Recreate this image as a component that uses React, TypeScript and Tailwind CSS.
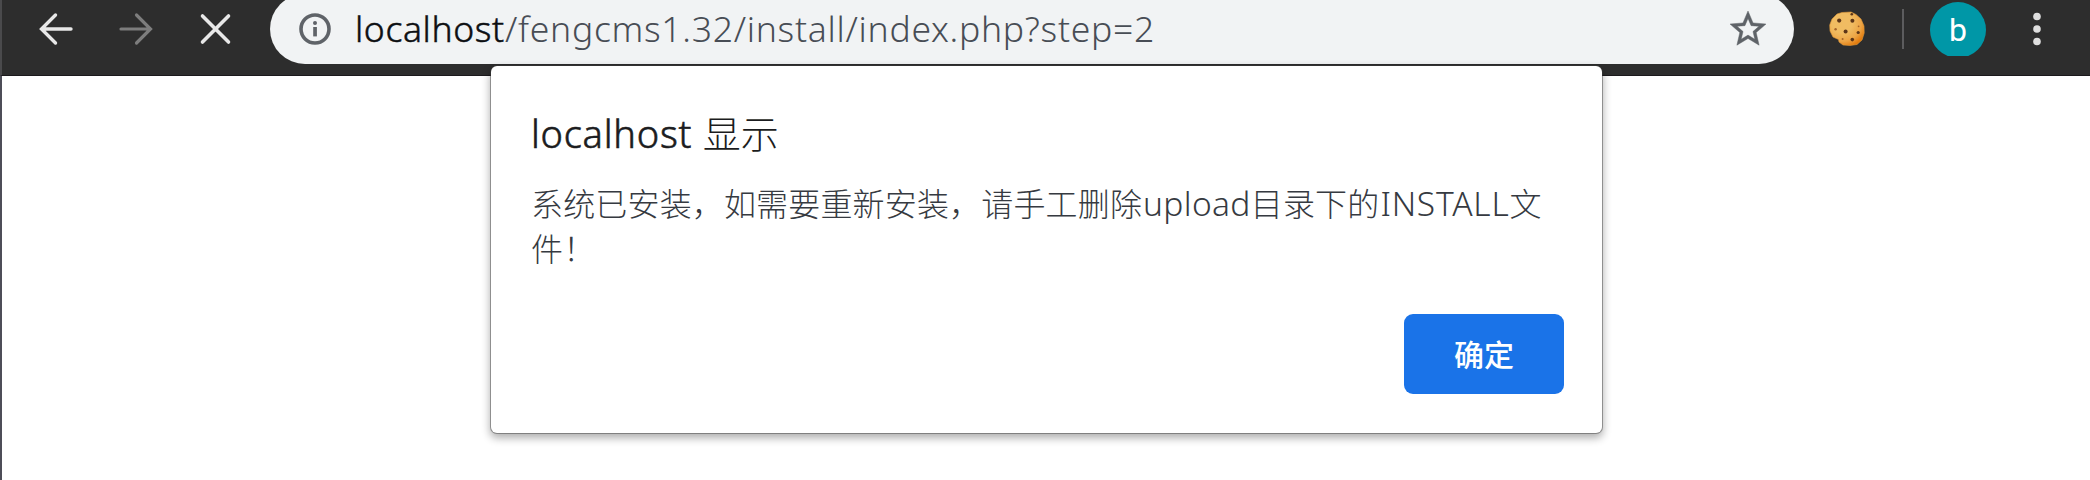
import React from "react";

const LATIN_CJK = "font-['Noto_Sans','Noto_Sans_CJK_SC',sans-serif]";

function BackIcon() {
  return (
    <svg className="h-[34px] w-[36px] shrink-0" viewBox="0 0 36 34" fill="none" stroke="#e8e8e8" strokeWidth="3.4" strokeLinecap="round">
      <path d="M17.5 3 3.5 17 17.5 31M4 17H33" />
    </svg>
  );
}

function ForwardIcon() {
  return (
    <svg className="h-[34px] w-[36px] shrink-0" viewBox="0 0 36 34" fill="none" stroke="#7d7d7d" strokeWidth="3.2" strokeLinecap="round">
      <path d="M18.5 3 32.5 17 18.5 31M32 17H3" />
    </svg>
  );
}

function StopIcon() {
  return (
    <svg className="h-[34px] w-[34px] shrink-0" viewBox="0 0 34 34" fill="none" stroke="#e8e8e8" strokeWidth="3.6" strokeLinecap="round">
      <path d="M3.5 4 29.5 30M29.5 4 3.5 30" />
    </svg>
  );
}

function InfoIcon() {
  return (
    <svg className="h-[34px] w-[34px] shrink-0" viewBox="0 0 34 34" fill="none">
      <circle cx="17" cy="17" r="14" stroke="#5f6368" strokeWidth="3.6" />
      <circle cx="17" cy="11" r="2" fill="#5f6368" />
      <rect x="15.2" y="15" width="3.7" height="9.4" fill="#5f6368" />
    </svg>
  );
}

function StarIcon() {
  return (
    <svg className="h-[36px] w-[36px] shrink-0" viewBox="2 2 20 20" fill="#5f6368" stroke="#5f6368" strokeWidth="0.25">
      <path d="M22 9.24l-7.19-.62L12 2 9.19 8.63 2 9.24l5.46 4.73L5.82 21 12 17.27 18.18 21l-1.63-7.03L22 9.24zM12 15.4l-3.76 2.27 1-4.28-3.32-2.88 4.38-.38L12 6.1l1.71 4.04 4.38.38-3.32 2.88 1 4.28L12 15.4z" />
    </svg>
  );
}

function CookieIcon() {
  return (
    <svg className="h-[36px] w-[36px] shrink-0" viewBox="0 0 36 36">
      <defs>
        <radialGradient id="dough" cx="0.36" cy="0.32" r="0.74">
          <stop offset="0.4" stopColor="#f0bc62" />
          <stop offset="0.75" stopColor="#eda545" />
          <stop offset="1" stopColor="#e27a0c" />
        </radialGradient>
      </defs>
      <path d="M13 1.5 22 1 27 3.5 32 8 35 15 35.2 22 33 29 28 33.5 21 34.5 14 34 10 31 9.5 28.5 4 26 1 20 .7 14 3 8 8 3Z" fill="url(#dough)" stroke="#e09a3a" strokeWidth="0.6" strokeLinejoin="round" />
      <g fill="#5c3518">
        <circle cx="10.2" cy="9.6" r="2.1" />
        <circle cx="23.4" cy="9.8" r="2" />
        <circle cx="16.6" cy="20.5" r="2" />
        <circle cx="29.2" cy="21.5" r="1.6" />
        <circle cx="23.3" cy="28.6" r="1.8" />
        <circle cx="22.8" cy="3.3" r="1.3" />
        <circle cx="6.6" cy="18.2" r="1.2" fill="#a5652a" />
        <circle cx="13.6" cy="28" r="1" fill="#a5652a" />
        <circle cx="29.6" cy="15.3" r="0.9" fill="#a5652a" />
      </g>
    </svg>
  );
}

function MenuIcon() {
  return (
    <svg className="h-[34px] w-[10px] shrink-0" viewBox="0 0 10 34" fill="#dedede">
      <circle cx="5" cy="4.5" r="3.8" />
      <circle cx="5" cy="17" r="3.8" />
      <circle cx="5" cy="29.5" r="3.8" />
    </svg>
  );
}

function Toolbar() {
  return (
    <header className="flex h-[76px] w-full items-start overflow-hidden border-b border-l-2 border-b-[#1b191c] border-l-[#4a4a4c] bg-[#2d2d2d]">
      <div className="flex h-[57px] w-[268px] shrink-0 items-center pl-[36px]">
        <BackIcon />
        <div className="ml-[44px]"><ForwardIcon /></div>
        <div className="ml-[45px]"><StopIcon /></div>
      </div>
      <div className="-mt-[6px] flex h-[70px] w-[1524px] shrink-0 items-center rounded-full bg-[#f1f3f4] pr-[28px] pl-[28px]">
        <InfoIcon />
        <div className="ml-[23px] flex-1 pb-[2px] text-[35.5px] leading-[68px] whitespace-nowrap">
          <span className="inline-block w-[150px] font-light tracking-[0.6px] text-[#0d0f12] [-webkit-text-stroke:0.5px_#0d0f12]">localhost</span>
          <span className="font-light tracking-[0.72px] text-[#484d55]">/fengcms1.32/install/index.php?step=2</span>
        </div>
        <StarIcon />
      </div>
      <div className="flex h-[58px] items-center">
        <div className="ml-[35px]"><CookieIcon /></div>
        <div className="ml-[37px] h-[40px] w-[2px] bg-[#5c5c5e]" />
        <div className="ml-[26px] flex h-[54px] w-[56px] items-start justify-center overflow-hidden">
          <div className="flex h-[56px] w-[56px] shrink-0 items-center justify-center rounded-full bg-[#0097a7] font-[Roboto,sans-serif] text-[32px] leading-none text-white">
            b
          </div>
        </div>
        <div className="ml-[46px]"><MenuIcon /></div>
      </div>
    </header>
  );
}

function AlertDialog() {
  return (
    <section
      role="alertdialog"
      className="absolute top-[66px] left-[491px] flex h-[367px] w-[1111px] flex-col rounded-[6px] bg-white pr-[38px] pl-[40px] shadow-[0_0_0_1px_rgba(60,60,60,0.45),0_4px_9px_1px_rgba(0,0,0,0.32)]"
    >
      <h1 className="mt-[41px] h-[53px] text-[38px] leading-[52px] font-normal whitespace-nowrap text-[#1b1c20]">
        <span className="font-light tracking-[0.75px] [-webkit-text-stroke:0.6px_#1b1c20]">localhost </span>
        <span className="font-light">显示</span>
      </h1>
      <p className="mt-[21px] h-[92px] text-[32px] leading-[45px] font-light tracking-[0.16px] whitespace-nowrap text-[#363a41]">
        系统已安装，如需要重新安装，请手工删除<span className="pl-[1px] text-[33.5px] tracking-[0.35px]">upload</span>目录下的<span className="pl-[1px] text-[33.5px] tracking-[0.8px]">INSTALL</span>文
        <br />
        件！
      </p>
      <button className="mt-[41px] h-[80px] w-[160px] self-end rounded-[9px] bg-[#1a73e8] pt-[2px] text-[30px] leading-none font-medium text-white">
        确定
      </button>
    </section>
  );
}

export default function App() {
  return (
    <div className={`relative h-[480px] w-[2090px] overflow-hidden bg-white ${LATIN_CJK}`}>
      <Toolbar />
      <main className="h-[404px] border-l-2 border-[#4d4d58] bg-white" />
      <AlertDialog />
    </div>
  );
}
